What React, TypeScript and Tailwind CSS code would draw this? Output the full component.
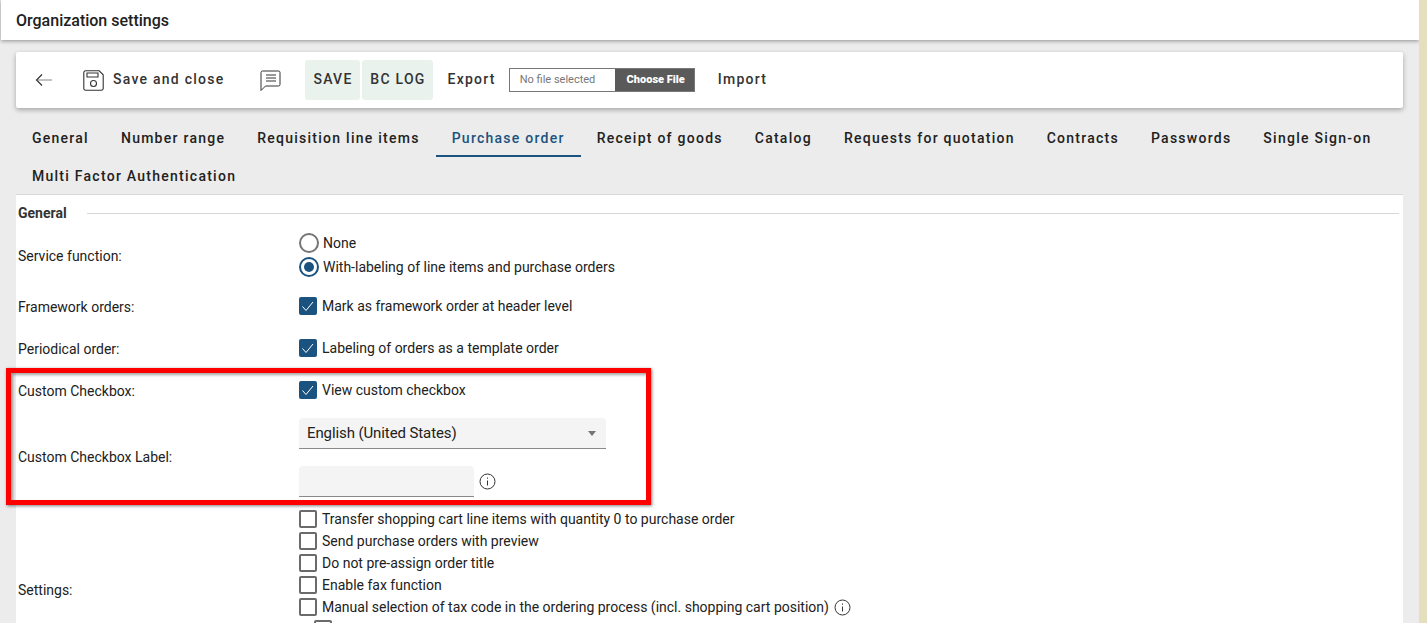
const TABS = ['General', 'Number range', 'Requisition line items', 'Purchase order', 'Receipt of goods', 'Catalog', 'Requests for quotation', 'Contracts', 'Passwords', 'Single Sign-on', 'Multi Factor Authentication'];

const SETTINGS = [
  'Transfer shopping cart line items with quantity 0 to purchase order',
  'Send purchase orders with preview',
  'Do not pre-assign order title',
  'Enable fax function',
];

function Check({ checked = false }: { checked?: boolean }) {
  if (!checked) return <span className="w-[18px] h-[18px] shrink-0 rounded-[2px] border-2 border-[#6b6b6b] bg-white" />;
  return (
    <span className="w-[18px] h-[18px] shrink-0 rounded-[2px] bg-[#1b5380] flex items-center justify-center">
      <svg width="14" height="14" viewBox="0 0 14 14" fill="none" stroke="#fff" strokeWidth="1">
        <path d="M1.5 7.5 5 11.5 12 3" />
      </svg>
    </span>
  );
}

function Radio({ checked = false }: { checked?: boolean }) {
  return (
    <span className={`w-5 h-5 shrink-0 rounded-full border-2 flex items-center justify-center ${checked ? 'border-[#1b5380]' : 'border-[#757575]'}`}>
      {checked && <span className="w-2.5 h-2.5 rounded-full bg-[#1b5380]" />}
    </span>
  );
}

function InfoIcon() {
  return (
    <svg width="17" height="17" viewBox="0 0 17 17" fill="none" stroke="#333" strokeWidth="1">
      <circle cx="8.5" cy="8.5" r="7.5" />
      <path d="M8.5 7.5v5M8.5 4.5v1.2" />
    </svg>
  );
}

function Row({ label, className, children }: { label: string; className?: string; children: React.ReactNode }) {
  return (
    <div className={`grid grid-cols-[281px_1fr] items-center ${className ?? ''}`}>
      <span className="pt-[2px] text-[14px] text-[#212121]">{label}</span>
      <div>{children}</div>
    </div>
  );
}

export default function App() {
  return (
    <div className="relative h-[623px] w-[1427px] overflow-hidden bg-[#e6dfbd] font-['Roboto',sans-serif] text-[#212121]">
      <div className="w-[1419px] h-full bg-[#ececec] overflow-hidden">

        {/* Title */}
        <div className="h-10 ml-px pt-[2px] bg-white shadow-[0_1px_4px_rgba(0,0,0,0.4)] flex items-center pl-[15px] text-[16px] font-medium leading-none relative">
          Organization settings
        </div>

        {/* Toolbar */}
        <div className="mt-3 ml-4 w-[1387px] h-14 bg-white rounded-[2px] shadow-[0_2px_5px_rgba(0,0,0,0.3)] flex items-center text-[14px] font-medium tracking-[1.25px] text-[#333]">
          <svg className="ml-[19px]" width="18" height="14" viewBox="0 0 18 14" fill="none" strokeWidth="1.2">
            <path d="M17 7H3" stroke="#999" />
            <path d="M7 1.5 1.5 7 7 12.5" stroke="#333" />
          </svg>
          <svg className="ml-[30px]" width="21" height="21" viewBox="0 0 21 21" fill="none" stroke="#333" strokeWidth="1.1">
            <path d="M2.5.8h13.7l4 4v13.7a1.7 1.7 0 0 1-1.7 1.7h-16a1.7 1.7 0 0 1-1.7-1.7V2.5A1.7 1.7 0 0 1 2.5.8Z" />
            <path d="M4 3h11v4H4z" />
            <circle cx="10.5" cy="13.5" r="3" />
          </svg>
          <span className="ml-[9px] pb-[2px]">Save and close</span>
          <svg className="ml-[35px]" width="21" height="21" viewBox="0 0 21 21" fill="none" stroke="#333" strokeWidth="1">
            <path d="M1 2.5A1.5 1.5 0 0 1 2.5 1h16A1.5 1.5 0 0 1 20 2.5v12a1.5 1.5 0 0 1-1.5 1.5H5.5L1 20.5Z" />
            <path d="M6 5h10M6 8h10M6 11h10" />
          </svg>
          <span className="ml-6 h-10 w-[55px] pb-[2px] pl-0.5 rounded-[3px] bg-[#e9f2ec] flex items-center justify-center">SAVE</span>
          <span className="ml-0.5 h-10 w-[71px] pb-[2px] pl-0.5 rounded-[3px] bg-[#e9f2ec] flex items-center justify-center">BC LOG</span>
          <span className="ml-[15px] pb-[2px]">Export</span>
          <div className="ml-[13px] h-6 w-[186px] flex border border-[#777] text-[11px] font-normal tracking-normal">
            <span className="w-[104px] flex items-center pl-[10px] text-[#777]">No file selected</span>
            <span className="flex-1 ml-px pl-[3px] bg-[#5a5a5a] text-white font-black flex items-center justify-center">Choose File</span>
          </div>
          <span className="ml-[23px] pb-[2px]">Import</span>
        </div>

        {/* Tabs */}
        <div className="mt-[11px] ml-4 w-[1387px] flex flex-wrap text-[14px] font-medium tracking-[1.255px]">
          {TABS.map(t => (
            <span key={t} className={`h-[38px] px-4 flex items-center ${t === 'Purchase order' ? 'text-[#1b5380] shadow-[inset_0_-2px_0_#1b5380]' : ''}`}>{t}</span>
          ))}
        </div>

        {/* Panel */}
        <div className="-mt-px ml-4 w-[1387px] bg-white border-t border-[#d8d8d8] pl-0.5 pr-1 text-[14px]">
          <div className="h-9 flex items-center">
            <span className="font-bold text-[#333]">General</span>
            <span className="ml-5 flex-1 h-px bg-[#d8d8d8]" />
          </div>

          <Row label="Service function:" className="h-[48px]">
            <div className="flex items-center gap-1 h-6"><Radio /><span>None</span></div>
            <div className="flex items-center gap-1 h-6"><Radio checked /><span>With-labeling of line items and purchase orders</span></div>
          </Row>

          <Row label="Framework orders:" className="h-[42px] mt-[6px]">
            <div className="flex items-center gap-[5px]"><Check checked /><span>Mark as framework order at header level</span></div>
          </Row>
          <Row label="Periodical order:" className="h-[42px]">
            <div className="flex items-center gap-[5px]"><Check checked /><span>Labeling of orders as a template order</span></div>
          </Row>
          <Row label="Custom Checkbox:" className="h-[42px]">
            <div className="flex items-center gap-[5px]"><Check checked /><span>View custom checkbox</span></div>
          </Row>

          <Row label="Custom Checkbox Label:" className="h-[86px] mt-[3px] [&>span]:pt-0">
            <div className="w-[307px] h-[31px] pt-[2px] bg-[#f4f4f4] rounded-t-[4px] border-b border-[#8a8a8a] flex items-center justify-between pl-2 pr-[10px] text-[15px] tracking-[-0.1px]">
              <span>English (United States)</span>
              <span className="w-0 h-0 border-x-[4px] border-x-transparent border-t-[5px] border-t-[#757575]" />
            </div>
            <div className="mt-[17px] flex items-center gap-[5px]">
              <div className="w-[175px] h-[31px] bg-[#f4f4f4] rounded-t-[4px] border-b border-[#8a8a8a]" />
              <InfoIcon />
            </div>
          </Row>

          <Row label="Settings:" className="h-[162px] mt-[8px]">
            <div className="pb-[30px]">
              {SETTINGS.map(s => (
                <div key={s} className="h-[22px] flex items-center gap-[5px]"><Check /><span>{s}</span></div>
              ))}
              <div className="h-[22px] flex items-center gap-[5px]">
                <Check />
                <span>Manual selection of tax code in the ordering process (incl. shopping cart position)</span>
                <InfoIcon />
              </div>
              <div className="h-[22px] flex items-center pl-[15px]"><Check /></div>
            </div>
          </Row>
        </div>
      </div>

      {/* Annotation frame */}
      <div className="absolute left-1.5 top-[368px] w-[645px] h-[137px] border-[5px] border-[#fe0000] shadow-[1px_1px_3px_rgba(0,0,0,0.5),inset_2px_2px_3px_rgba(0,0,0,0.35)]" />
    </div>
  );
}
